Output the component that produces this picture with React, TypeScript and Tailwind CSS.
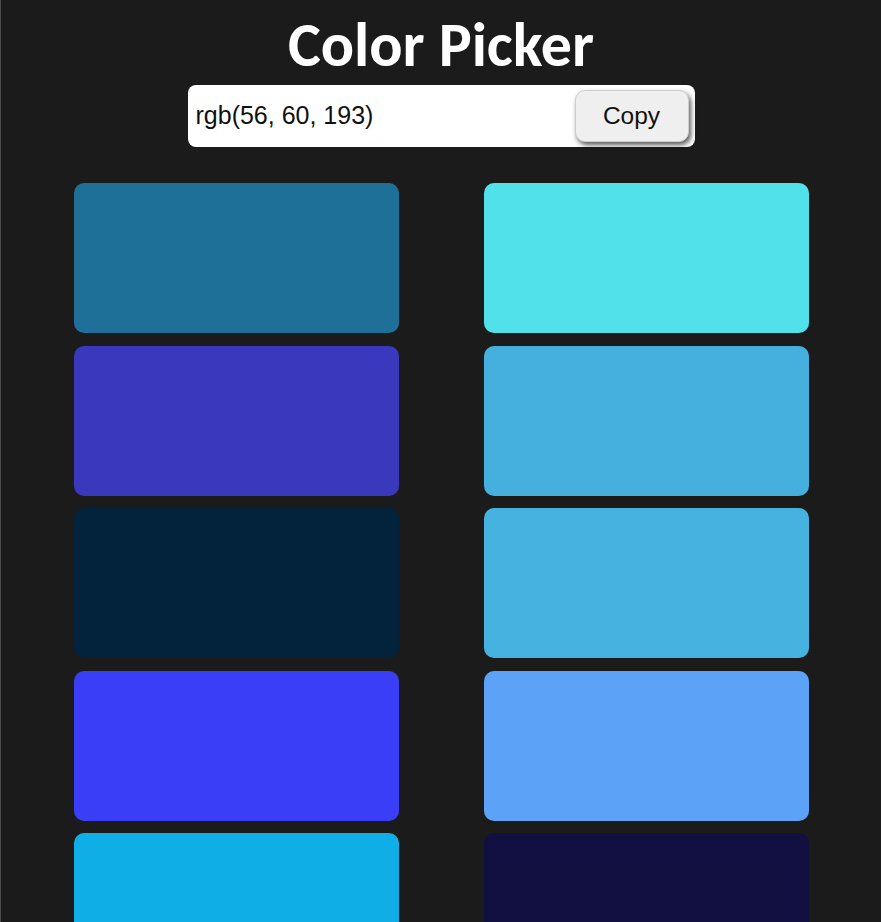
const colors: [string, string][] = [
  ["#1f7099", "#50e1ea"],
  ["#3a39bd", "#45afdd"],
  ["#03223b", "#46b2e0"],
  ["#3a3ef7", "#5ca3f7"],
  ["#10aee6", "#120f41"],
];

export default function App() {
  return (
    <div className="min-h-screen bg-[#1b1b1b] border-l border-[#4a4a4a] overflow-hidden h-[922px]">
      <h1 className="text-center text-white font-bold text-[62px] leading-none pt-[14px] font-['Carlito','Lato',sans-serif]">
        Color Picker
      </h1>
      <div className="mx-auto mt-[9px] w-[507px] h-[62px] bg-white rounded-[8px] flex items-center justify-between pl-2 pr-[6px]">
        <span className="text-[25px] text-[#111] font-['Liberation_Sans',Arial,sans-serif]">
          rgb(56, 60, 193)
        </span>
        <button className="w-[114px] h-[52px] bg-[#efefef] rounded-[10px] border border-[#cfcfcf] shadow-[2px_3px_5px_rgba(0,0,0,0.65)] text-[24.5px] text-[#111] font-['Liberation_Sans',Arial,sans-serif]">
          Copy
        </button>
      </div>
      <div className="mx-auto mt-[36px] w-[735px] grid grid-cols-2 gap-x-[85px] gap-y-[12.5px]">
        {colors.flat().map((c, i) => (
          <div key={i} className="h-[150px] rounded-[10px]" style={{ backgroundColor: c }} />
        ))}
      </div>
    </div>
  );
}
